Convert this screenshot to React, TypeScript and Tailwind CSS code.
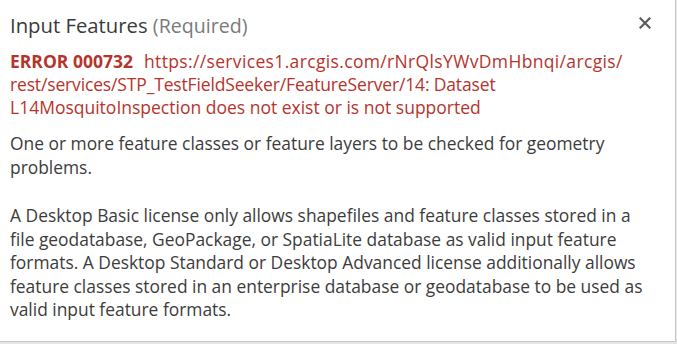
import React from "react";

export default function App() {
  return (
    <div className="w-[677px] h-[344px] bg-[#e6e6e6]" style={{ fontFamily: '"Open Sans", "Noto Sans", sans-serif' }}>
      <div className="relative w-[676px] h-[342px] bg-white border-r border-b border-[#c6c6c6] pl-[10px] pt-[11px]">
        <button className="absolute right-[24px] top-[17px] w-[12px] h-[12px]">
          <svg viewBox="0 0 12 12" width="12" height="12">
            <path d="M1.5 1.5 L10.5 10.5 M10.5 1.5 L1.5 10.5" stroke="#5a5a5a" strokeWidth="2.2" strokeLinecap="square" />
          </svg>
        </button>
        <div className="text-[20.3px] leading-[28px] text-[#3a3a3a] whitespace-nowrap">
          Input Features <span className="text-[#7a7a7a] text-[19.6px]">(Required)</span>
        </div>
        <div className="mt-[10px] text-[17.5px] leading-[23px] text-[#b5342c] whitespace-nowrap">
          <span className="font-bold">ERROR 000732</span>
          <span className="ml-[11px] tracking-[0.35px]">https://services1.arcgis.com/rNrQlsYWvDmHbnqi/arcgis/</span>
          <br />
          <span className="tracking-[-0.15px]">rest/services/STP_TestFieldSeeker/FeatureServer/14: Dataset</span>
          <br />
          L14MosquitoInspection does not exist or is not supported
        </div>
        <div className="mt-[13px] text-[17.4px] leading-[23.5px] text-[#3c3c3c] whitespace-nowrap">
          One or more feature classes or feature layers to be checked for geometry
          <br />
          problems.
        </div>
        <div className="mt-[25px] text-[17.4px] leading-[23.6px] text-[#3c3c3c] whitespace-nowrap">
          A Desktop Basic license only allows shapefiles and feature classes stored in a
          <br />
          file geodatabase, GeoPackage, or SpatiaLite database as valid input feature
          <br />
          formats. A Desktop Standard or Desktop Advanced license additionally allows
          <br />
          feature classes stored in an enterprise database or geodatabase to be used as
          <br />
          valid input feature formats.
        </div>
      </div>
    </div>
  );
}
